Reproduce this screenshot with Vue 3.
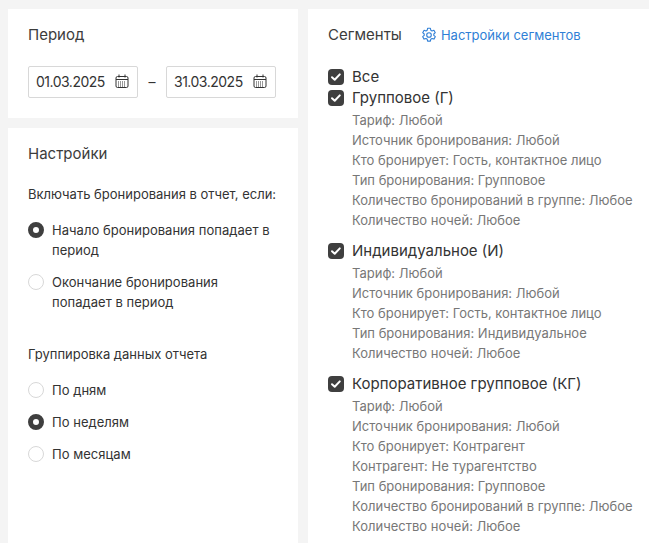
<script setup>
const segments = [
  { name: 'Групповое (Г)', lines: ['Тариф: Любой', 'Источник бронирования: Любой', 'Кто бронирует: Гость, контактное лицо', 'Тип бронирования: Групповое', 'Количество бронирований в группе: Любое', 'Количество ночей: Любое'] },
  { name: 'Индивидуальное (И)', lines: ['Тариф: Любой', 'Источник бронирования: Любой', 'Кто бронирует: Гость, контактное лицо', 'Тип бронирования: Индивидуальное', 'Количество ночей: Любое'] },
  { name: 'Корпоративное групповое (КГ)', lines: ['Тариф: Любой', 'Источник бронирования: Любой', 'Кто бронирует: Контрагент', 'Контрагент: Не турагентство', 'Тип бронирования: Групповое', 'Количество бронирований в группе: Любое', 'Количество ночей: Любое'] },
]
const dates = ['01.03.2025', '31.03.2025']
const includeOptions = [
  { label: 'Начало бронирования попадает в период', on: true },
  { label: 'Окончание бронирования попадает в период', on: false },
]
const groupOptions = [
  { label: 'По дням', on: false },
  { label: 'По неделям', on: true },
  { label: 'По месяцам', on: false },
]
</script>

<template>
  <div class="page">
    <div class="left">
      <section class="card period">
        <h2 class="title">Период</h2>
        <div class="dates">
          <template v-for="(d, i) in dates" :key="d">
            <span v-if="i === 1" class="dash">–</span>
            <div class="date">
              <span>{{ d }}</span>
              <svg class="cal" width="14" height="15" viewBox="0 0 14 15" fill="none" stroke="#333" stroke-width="1">
                <rect x="1" y="2.5" width="12" height="11" rx="1.5" />
                <path d="M1 5.5h12M4 .5v3M10 .5v3" />
                <path d="M3 8h8M3 10h8M3 12h8" stroke-dasharray="1 1" />
              </svg>
            </div>
          </template>
        </div>
      </section>
      <section class="card settings">
        <h2 class="title">Настройки</h2>
        <p class="label first">Включать бронирования в отчет, если:</p>
        <div class="radios wrap">
          <div v-for="o in includeOptions" :key="o.label" class="radio">
            <span class="dot" :class="{ on: o.on }"></span>
            <span class="rtext">{{ o.label }}</span>
          </div>
        </div>
        <p class="label second">Группировка данных отчета</p>
        <div class="radios">
          <div v-for="o in groupOptions" :key="o.label" class="radio">
            <span class="dot" :class="{ on: o.on }"></span>
            <span class="rtext">{{ o.label }}</span>
          </div>
        </div>
      </section>
    </div>
    <section class="card right">
      <div class="head">
        <h2 class="title">Сегменты</h2>
        <a class="link">
          <svg width="16" height="16" viewBox="0 0 16 16" fill="none" stroke="#2f7fd6" stroke-width="1.1" stroke-linejoin="round">
            <path d="M6.6 1.3h2.8l.4 1.9 1.2.7 1.9-.6 1.4 2.4-1.5 1.3v1.4l1.5 1.3-1.4 2.4-1.9-.6-1.2.7-.4 1.9H6.6l-.4-1.9-1.2-.7-1.9.6-1.4-2.4 1.5-1.3V7l-1.5-1.3 1.4-2.4 1.9.6 1.2-.7z" />
            <circle cx="8" cy="8" r="2.3" />
          </svg>
          <span>Настройки сегментов</span>
        </a>
      </div>
      <div class="check all">
        <span class="box"><svg width="16" height="16" viewBox="0 0 16 16" fill="none" stroke="#fff" stroke-width="2" stroke-linecap="round" stroke-linejoin="round"><path d="M4 8.3l2.7 2.5L11.8 5.4" /></svg></span>
        <span>Все</span>
      </div>
      <div v-for="s in segments" :key="s.name" class="segment">
        <div class="check">
          <span class="box"><svg width="16" height="16" viewBox="0 0 16 16" fill="none" stroke="#fff" stroke-width="2" stroke-linecap="round" stroke-linejoin="round"><path d="M4 8.3l2.7 2.5L11.8 5.4" /></svg></span>
          <span>{{ s.name }}</span>
        </div>
        <div class="lines">
          <div v-for="l in s.lines" :key="l" class="line">{{ l }}</div>
        </div>
      </div>
    </section>
  </div>
</template>

<style>
html, body { margin: 0; background: #f4f4f4; overflow: hidden; }
</style>

<style scoped>
.page {
  width: 649px;
  height: 543px;
  overflow: hidden;
  box-sizing: border-box;
  padding: 9px 0 0 8px;
  display: flex;
  gap: 10px;
  align-items: flex-start;
  font-family: Inter, "Noto Sans", sans-serif;
  color: #333;
}
.left { width: 290px; display: flex; flex-direction: column; gap: 10px; flex: none; }
.card { background: #fff; box-sizing: border-box; }
.period { height: 109px; padding: 16px 20px 0; }
.settings { height: 460px; padding: 16px 20px 0; }
.right { flex: 1; height: 560px; padding: 16px 20px 0; }
.title { margin: 0; font-size: 15px; font-weight: 400; line-height: 20px; color: #3c3c3c; }
.dates { display: flex; align-items: center; margin-top: 21px; }
.date {
  width: 110px; height: 32px; box-sizing: border-box;
  border: 1px solid #d8d8d8; border-radius: 2px;
  display: flex; align-items: center; justify-content: space-between;
  padding: 0 8px 2px 7px; font-size: 14px; letter-spacing: -0.5px; color: #333;
}
.dash { width: 28px; text-align: center; font-size: 14px; padding-bottom: 2px; }
.label { margin: 0; font-size: 13px; line-height: 20px; color: #333; }
.first { margin-top: 20px; }
.second { margin-top: 32px; }
.radios { display: flex; flex-direction: column; gap: 12px; margin-top: 16px; }
.radios.wrap { gap: 12px; margin-top: 16px; }
.radio { display: flex; gap: 8px; align-items: flex-start; font-size: 13px; line-height: 20px; letter-spacing: 0.03px; }
.rtext { flex: 1; }
.dot {
  width: 16px; height: 16px; box-sizing: border-box; border-radius: 50%;
  border: 1px solid #d8d8d8; flex: none; margin-top: 2px; background: #fff;
}
.dot.on { border: 5px solid #3f3f3f; }
.head { display: flex; align-items: center; gap: 19px; }
.link { display: flex; align-items: center; gap: 4px; font-size: 13px; color: #2f7fd6; }
.all { margin-top: 22px; }
.check { display: flex; align-items: center; gap: 8px; font-size: 15px; line-height: 20px; color: #333; }
.box {
  width: 16px; height: 16px; border-radius: 4px; background: #3f3f3f; flex: none;
  display: flex;
}
.segment { margin-bottom: 10px; padding-top: 1px; }
.lines { margin-left: 24px; margin-top: 2px; }
.line { font-size: 13px; line-height: 20px; color: #777; white-space: nowrap; }
</style>
